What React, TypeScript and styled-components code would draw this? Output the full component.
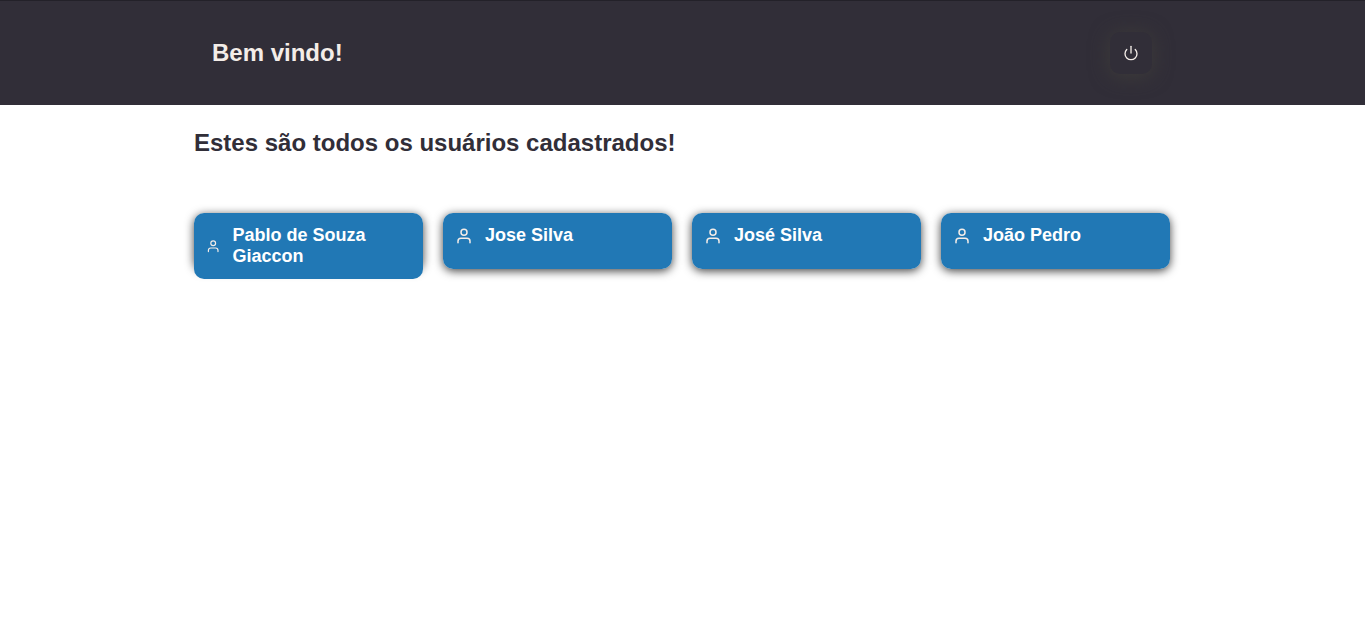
import React from "react";
import styled, { createGlobalStyle } from "styled-components";
import { FiPower, FiUser } from "react-icons/fi";

const GlobalStyle = createGlobalStyle`
  * { margin: 0; padding: 0; box-sizing: border-box; }
  body { background: #fff; font-family: "Liberation Sans", Arial, sans-serif; color: #312e38; }
`;

const Header = styled.header`
  height: 105px;
  background: #312e38;
  border-top: 1px solid #232129;
`;

const HeaderContent = styled.div`
  width: 977px;
  height: 100%;
  margin: 0 auto;
  padding: 0 19px 0 18px;
  display: flex;
  align-items: center;
  justify-content: space-between;
`;

const Welcome = styled.h1`
  font-size: 24px;
  line-height: 28px;
  color: #f4ede8;
`;

const PowerButton = styled.button`
  display: flex;
  align-items: center;
  justify-content: center;
  width: 42px;
  height: 42px;
  border: 0;
  border-radius: 10px;
  background: #312e38;
  color: #f4ede8;
  box-shadow: 0 2px 20px #3e3c3a;
`;

const Main = styled.main`
  width: 977px;
  min-height: calc(100vh - 105px);
  margin: 0 auto;
  padding-top: 24px;
`;

const Title = styled.h2`
  font-size: 24px;
  line-height: 28px;
`;

const UserGrid = styled.ul`
  margin-top: 56px;
  display: grid;
  grid-template-columns: repeat(4, 229px);
  gap: 20px;
  list-style: none;
`;

const UserItem = styled.li`
  height: 56px;
  border-radius: 10px;
  box-shadow: 0 2px 10px rgba(0, 0, 0, 0.75);
`;

const Card = styled.article<{ $tall?: boolean }>`
  display: flex;
  align-items: ${(p) => (p.$tall ? "center" : "flex-start")};
  height: ${(p) => (p.$tall ? 66 : 56)}px;
  padding: ${(p) => (p.$tall ? "0 12px" : "12px")};
  border-radius: 10px;
  background: #2178b5;
  color: #fff;

  svg {
    flex: none;
    margin-top: ${(p) => (p.$tall ? 0 : 2)}px;
    color: #f4ede8;
  }
`;

const Name = styled.strong`
  font-size: 18px;
  line-height: 21px;
  margin-left: 12px;
`;

const users = ["Pablo de Souza Giaccon", "Jose Silva", "José Silva", "João Pedro"];

export default function App() {
  return (
    <>
      <GlobalStyle />
      <Header>
        <HeaderContent>
          <Welcome>Bem vindo!</Welcome>
          <PowerButton aria-label="Sair"><FiPower size={16} /></PowerButton>
        </HeaderContent>
      </Header>
      <Main>
        <Title>Estes são todos os usuários cadastrados!</Title>
        <UserGrid>
          {users.map((name, i) => (
            <UserItem key={name}>
              <Card $tall={i === 0}>
                <FiUser size={i === 0 ? 14.4 : 18} />
                <Name>{name}</Name>
              </Card>
            </UserItem>
          ))}
        </UserGrid>
      </Main>
    </>
  );
}
